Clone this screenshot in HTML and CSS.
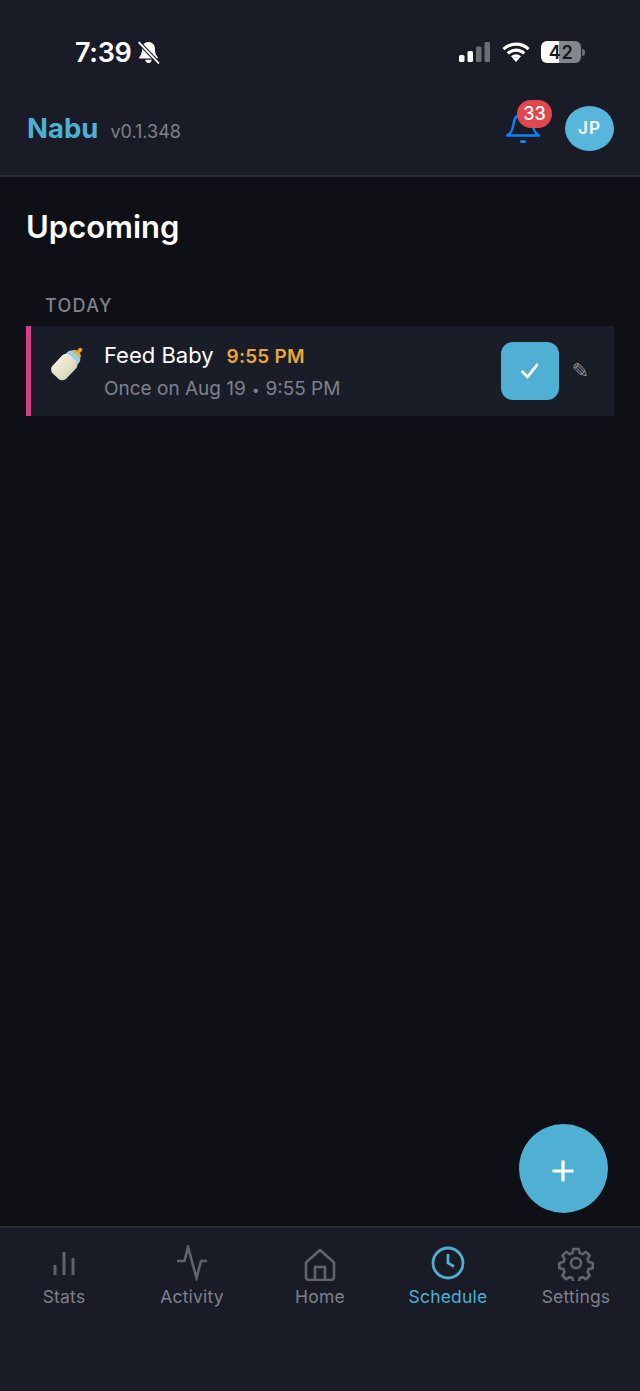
FILE: index.html
```html
<!DOCTYPE html>
<html lang="en">
<head>
  <meta charset="UTF-8" />
  <meta name="viewport" content="width=device-width, initial-scale=1.0"/>
  <title>Nabu - Schedule</title>
  <link rel="stylesheet" href="styles.css">
</head>
<body>
<div class="app">

  <header class="top">
    <div class="status">
      <div class="status-left">
        <span class="clock">7:39</span>
        <svg class="muted-bell" viewBox="0 0 24 24" width="25" height="25">
          <path d="M12 1.800c-3.800 0-6.200 2.800-6.200 6.500 0 4.300-.9 5.900-2.600 8-.5.7-.1 1.500.8 1.500h16c.9 0 1.300-.8.8-1.500-1.700-2.100-2.600-3.700-2.600-8 0-3.700-2.400-6.500-6.200-6.500z" fill="#fff"/>
          <path d="M9 19a3 3 0 0 0 6 0z" fill="#fff"/>
          <path d="M3 2.500 21.500 22" stroke="#191c27" stroke-width="3.800"/>
          <path d="M3 2.500 21.500 22" stroke="#fff" stroke-width="1.800" stroke-linecap="round"/>
        </svg>
      </div>
      <div class="status-right">
        <svg viewBox="0 0 32 20" width="32" height="20">
          <rect x="0" y="13" width="5.5" height="7" rx="1.6" fill="#fff"/>
          <rect x="8.5" y="9" width="5.5" height="11" rx="1.6" fill="#fff"/>
          <rect x="17" y="4.5" width="5.5" height="15.5" rx="1.6" fill="#6b6e76"/>
          <rect x="25.5" y="0" width="5.5" height="20" rx="1.6" fill="#6b6e76"/>
        </svg>
        <svg viewBox="0 0 28 20" width="28" height="20">
          <path d="M1.5 7.2a18 18 0 0 1 25 0M5.8 11.4a12 12 0 0 1 16.4 0M10 15.4a6 6 0 0 1 8 0" fill="none" stroke="#fff" stroke-width="3.1"/>
          <path d="M14 20l-3.2-3.4a4.6 4.6 0 0 1 6.4 0z" fill="#fff"/>
        </svg>
        <div class="battery"><span class="battery-num">42</span></div>
        <span class="battery-tip"></span>
      </div>
    </div>

    <div class="brand-row">
      <div class="brand">
        <span class="logo">Nabu</span>
        <span class="version">v0.1.348</span>
      </div>
      <div class="actions">
        <div class="bell">
          <svg viewBox="0 0 36 34" width="36" height="34">
            <path d="M2 25.500c4-2.500 5.500-5 6.500-11.500C9.500 7 13 4 18 4s8.500 3 9.500 10c1 6.500 2.500 9 6.500 11.500z" fill="none" stroke="#0a84ff" stroke-width="2.400" stroke-linejoin="round"/>
            <ellipse cx="18" cy="31.500" rx="3.200" ry="1.500" fill="#0a84ff"/>
          </svg>
          <span class="badge">33</span>
        </div>
        <div class="avatar">JP</div>
      </div>
    </div>
  </header>

  <main class="content">
    <h1>Upcoming</h1>
    <h2 class="day">TODAY</h2>

    <div class="task">
      <svg class="bottle" viewBox="-4 -4 44 44" width="44" height="44">
        <defs>
          <linearGradient id="milk" x1="0" y1="0" x2="1" y2="0">
            <stop offset="0" stop-color="#f3efdd"/>
            <stop offset="1" stop-color="#d9d4bb"/>
          </linearGradient>
        </defs>
        <g transform="rotate(43 18 18)">
          <rect x="16" y="-2" width="4" height="5" rx="1.800" fill="#e6a526"/>
          <path d="M12.500 6.500c0-2.500 2-4 5.500-4s5.500 1.500 5.500 4z" fill="#eab233"/>
          <path d="M10 11c0-2.500 1.500-4.500 2.500-5h11c1 .5 2.500 2.500 2.500 5v2H10z" fill="#9ccfe4"/>
          <rect x="8.500" y="11" width="19" height="25" rx="5.500" fill="url(#milk)"/>
        </g>
      </svg>
      <div class="task-text">
        <div class="task-title">
          <span class="task-name">Feed Baby</span>
          <span class="task-time">9:55 PM</span>
        </div>
        <div class="task-sub">Once on Aug 19 <span class="dot">•</span> 9:55 PM</div>
      </div>
      <div class="check">
        <svg viewBox="0 0 20 20" width="20" height="20">
          <path d="M2.500 10.800 7.500 16 17 3.800" fill="none" stroke="#fff" stroke-width="2.800" stroke-linecap="round" stroke-linejoin="round"/>
        </svg>
      </div>
      <span class="edit">✎</span>
    </div>

    <button class="fab">
      <svg viewBox="0 0 24 24" width="24" height="24">
        <path d="M12 1.500v21M1.500 12h21" stroke="#fff" stroke-width="3.200"/>
      </svg>
    </button>
  </main>

  <nav class="tabs">
    <div class="tab">
      <svg viewBox="0 0 28 28" width="28" height="28">
        <path d="M5 16v10M14 3v23M23 9v17" fill="none" stroke="#5f636d" stroke-width="3"/>
      </svg>
      <span>Stats</span>
    </div>
    <div class="tab">
      <svg viewBox="0 0 32 36" width="32" height="36">
        <path d="M1 16h7.500L12 2l8.500 31 4.500-17h6" fill="none" stroke="#5f636d" stroke-width="2.600" stroke-linejoin="miter"/>
      </svg>
      <span>Activity</span>
    </div>
    <div class="tab">
      <svg viewBox="0 -2 32 34" width="32" height="34">
        <path d="M2 14.500 16 2l14 12.500V29a3 3 0 0 1-3 3H5a3 3 0 0 1-3-3z" fill="none" stroke="#5f636d" stroke-width="2.600" stroke-linejoin="round"/>
        <path d="M11 32V19h10v13" fill="none" stroke="#5f636d" stroke-width="2.600"/>
      </svg>
      <span>Home</span>
    </div>
    <div class="tab active">
      <svg viewBox="0 0 34 34" width="34" height="34">
        <circle cx="17" cy="17" r="15" fill="none" stroke="#4fb0d3" stroke-width="2.800"/>
        <path d="M17 8v9l6 3.500" fill="none" stroke="#4fb0d3" stroke-width="2.800"/>
      </svg>
      <span>Schedule</span>
    </div>
    <div class="tab">
      <svg viewBox="0 0 36 36" width="36" height="36">
        <path d="M15 2h6l1 4.500 3.300 1.400 4-2.500 4.200 4.200-2.500 4 1.400 3.300 4.600 1v6l-4.600 1-1.400 3.300 2.500 4-4.200 4.200-4-2.500-3.300 1.400-1 4.500h-6l-1-4.500-3.300-1.400-4 2.500-4.200-4.200 2.500-4-1.400-3.300-4.600-1v-6l4.600-1 1.400-3.300-2.500-4 4.200-4.200 4 2.500 3.300-1.400z" transform="translate(2.200 2.200) scale(.88)" fill="none" stroke="#5f636d" stroke-width="3" stroke-linejoin="round"/>
        <circle cx="18" cy="18" r="5" fill="none" stroke="#5f636d" stroke-width="2.600"/>
      </svg>
      <span>Settings</span>
    </div>
  </nav>

</div>
</body>
</html>
```

FILE: styles.css
```css
* { box-sizing: border-box; margin: 0; padding: 0; }

body {
  font-family: Inter, 'Liberation Sans', sans-serif;
  background-color: #0e1015;
  color: #fff;
}

.app {
  width: 640px;
  height: 1391px;
  display: flex;
  flex-direction: column;
  overflow: hidden;
}

/* top bar */
.top {
  height: 177px;
  background-color: #191c27;
  border-bottom: 2px solid #2a2e39;
  padding: 36px 26px 0 27px;
}

.status {
  display: flex;
  justify-content: space-between;
  align-items: center;
  height: 32px;
  padding: 0 29px 0 48px;
}

.status-left {
  display: flex;
  align-items: center;
  gap: 4px;
}

.clock {
  font-size: 27px;
  font-weight: 600;
  letter-spacing: -0.3px;
}

.status-right {
  display: flex;
  align-items: center;
  gap: 11px;
}

.battery {
  width: 40px;
  height: 22px;
  border-radius: 6px;
  background: linear-gradient(to right, #fff 0, #fff 44%, #85868b 44%, #85868b 100%);
  display: flex;
  align-items: center;
  justify-content: center;
}

.battery-num {
  color: #15171d;
  font-size: 18px;
  font-weight: 600;
  letter-spacing: 0.6px;
}

.battery-tip {
  width: 3px;
  height: 7px;
  margin-left: -10px;
  border-radius: 0 3px 3px 0;
  background-color: #6b6e76;
}

.brand-row {
  display: flex;
  justify-content: space-between;
  align-items: center;
  height: 60px;
  margin-top: 30px;
}

.brand {
  display: flex;
  align-items: baseline;
  gap: 12px;
}

.logo {
  color: #4fb0d3;
  font-size: 27.5px;
  font-weight: 700;
}

.version {
  color: #7e828c;
  font-size: 18px;
}

.actions {
  display: flex;
  align-items: center;
  gap: 24px;
}

.bell {
  position: relative;
  width: 36px;
  height: 34px;
  margin-bottom: 3px;
}

.badge {
  position: absolute;
  top: -10px;
  left: 12px;
  width: 35px;
  height: 28px;
  border-radius: 14px;
  background-color: #e0484e;
  font-size: 18px;
  font-weight: 500;
  line-height: 28px;
  text-align: center;
}

.avatar {
  width: 49px;
  height: 45px;
  border-radius: 50%;
  background-color: #56b6dc;
  font-size: 17px;
  font-weight: 600;
  letter-spacing: 1px;
  line-height: 45px;
  text-align: center;
}

/* main list */
.content {
  position: relative;
  flex: 1;
  padding: 31px 26px 0 26px;
  background-color: #0e1015;
}

h1 {
  font-size: 31px;
  font-weight: 600;
  line-height: 38px;
}

.day {
  color: #7e828c;
  font-size: 18px;
  font-weight: 500;
  letter-spacing: 1.3px;
  line-height: 22px;
  margin: 49px 0 9px 19px;
}

.task {
  display: flex;
  align-items: center;
  height: 90px;
  background-color: #191d28;
  border-left: 5px solid #d63f8e;
  padding-left: 15px;
}

.bottle {
  flex-shrink: 0;
  margin-bottom: 16px;
}

.task-text {
  flex: 1;
  margin: 2px 0 0 14px;
}

.task-title {
  display: flex;
  align-items: baseline;
  gap: 13px;
  line-height: 28px;
}

.task-name {
  font-size: 22px;
  font-weight: 400;
}

.task-time {
  color: #eba63a;
  font-size: 19px;
  font-weight: 600;
  letter-spacing: 0.2px;
}

.task-sub {
  color: #7e828c;
  font-size: 19px;
  line-height: 26px;
  margin-top: 5px;
}

.dot {
  font-size: 14px;
  padding: 0 0.5px;
}

.check {
  width: 58px;
  height: 58px;
  border-radius: 12px;
  background-color: #4fb0d3;
  display: flex;
  align-items: center;
  justify-content: center;
}

.edit {
  color: #8a8d95;
  font-family: 'DejaVu Sans', sans-serif;
  font-size: 21px;
  margin: 0 25px 0 12px;
}

.fab {
  position: absolute;
  right: 32px;
  bottom: 13px;
  width: 89px;
  height: 89px;
  border: none;
  border-radius: 50%;
  background-color: #4fb0d3;
  display: flex;
  align-items: center;
  justify-content: center;
  padding: 5px 2px 0 0;
}

/* bottom tabs */
.tabs {
  height: 165px;
  display: grid;
  grid-template-columns: repeat(5, 1fr);
  background-color: #191c27;
  border-top: 2px solid #2a2e39;
  padding-top: 17px;
}

.tab {
  display: flex;
  flex-direction: column;
  align-items: center;
  color: #7e828c;
  font-size: 17.5px;
  letter-spacing: 0.2px;
}

.tab svg {
  height: 36px;
}

.tab span {
  margin-top: 5px;
  line-height: 22px;
}

.tab.active {
  color: #4fb0d3;
}
```
